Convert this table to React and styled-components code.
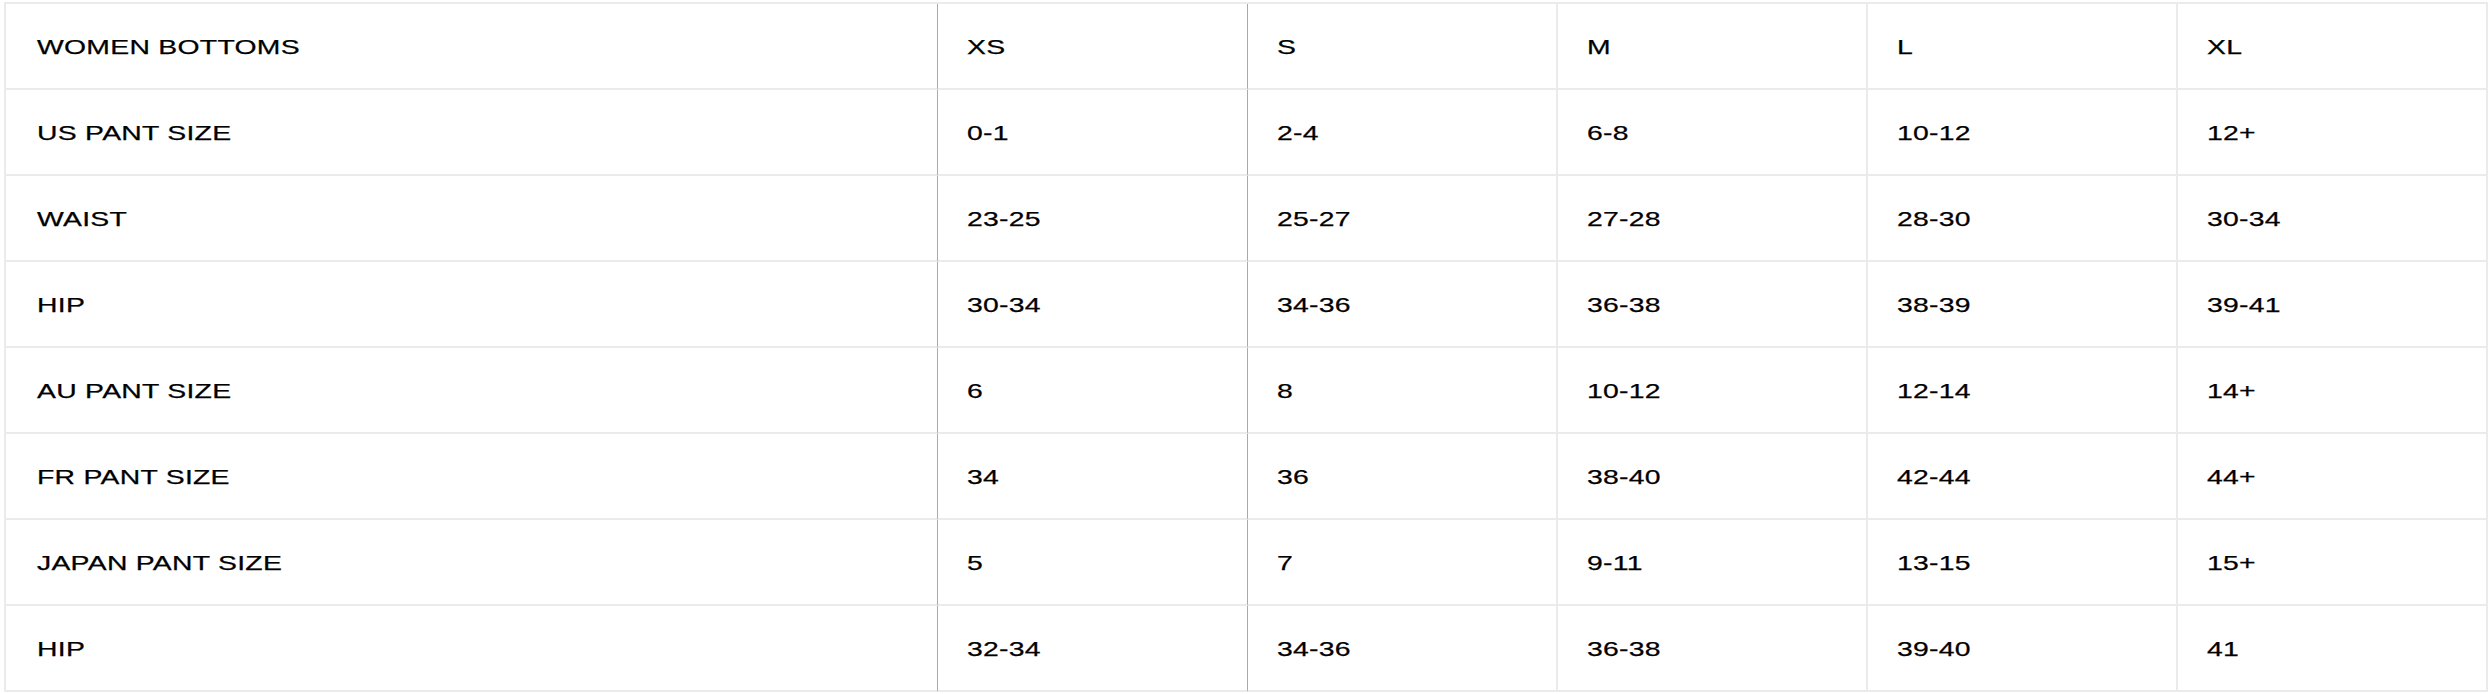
import React from "react";
import styled, { createGlobalStyle } from "styled-components";

const Global = createGlobalStyle`
  * { box-sizing: border-box; }
  body {
    margin: 0;
    background: #fff;
    font-family: "Liberation Sans", Arial, sans-serif;
    color: #000;
  }
`

const Wrap = styled.div`
  padding: 2px 2px 0 4px;
`

const Table = styled.table`
  width: 2482px;
  table-layout: fixed;
  border-collapse: separate;
  border-spacing: 0;
  border-top: 2px solid #ebebeb;
  border-left: 2px solid #ebebeb;
`

const Col = styled.col`
  width: ${p => p.$w}px;
`

const Cell = styled.td`
  height: 86px;
  padding: 1px 0 0 ${p => (p.$first ? 31 : 29)}px;
  vertical-align: middle;
  border-bottom: 2px solid #ebebeb;
  border-right: ${p => (p.$strong ? "1px solid #a9a9a9" : "2px solid #ebebeb")};
  font-size: 21px;
  font-weight: 400;
  text-align: left;
  white-space: nowrap;
`

const Label = styled.span`
  display: inline-block;
  transform: scaleX(1.35);
  transform-origin: left center;
  letter-spacing: 0.2px;
  -webkit-text-stroke: 0.25px #000;
`

const sizes = ["XS", "S", "M", "L", "XL"];

const rows = [
    ["WOMEN BOTTOMS", ...sizes],
    ["US PANT SIZE", "0-1", "2-4", "6-8", "10-12", "12+"],
    ["WAIST", "23-25", "25-27", "27-28", "28-30", "30-34"],
    ["HIP", "30-34", "34-36", "36-38", "38-39", "39-41"],
    ["AU PANT SIZE", "6", "8", "10-12", "12-14", "14+"],
    ["FR PANT SIZE", "34", "36", "38-40", "42-44", "44+"],
    ["JAPAN PANT SIZE", "5", "7", "9-11", "13-15", "15+"],
    ["HIP", "32-34", "34-36", "36-38", "39-40", "41"],
];

export default function App() {
    return (
        <Wrap>
            <Global />
            <Table>
                <colgroup>
                    <Col $w={932} />
                    {sizes.map(s => <Col key={s} $w={310} />)}
                </colgroup>
                <tbody>
                    {rows.map((row, i) => (
                        <tr key={i}>
                            {row.map((v, j) => (
                                <Cell key={j} $first={j === 0} $strong={j < 2}>
                                    <Label>{v}</Label>
                                </Cell>
                            ))}
                        </tr>
                    ))}
                </tbody>
            </Table>
        </Wrap>
    )
}
